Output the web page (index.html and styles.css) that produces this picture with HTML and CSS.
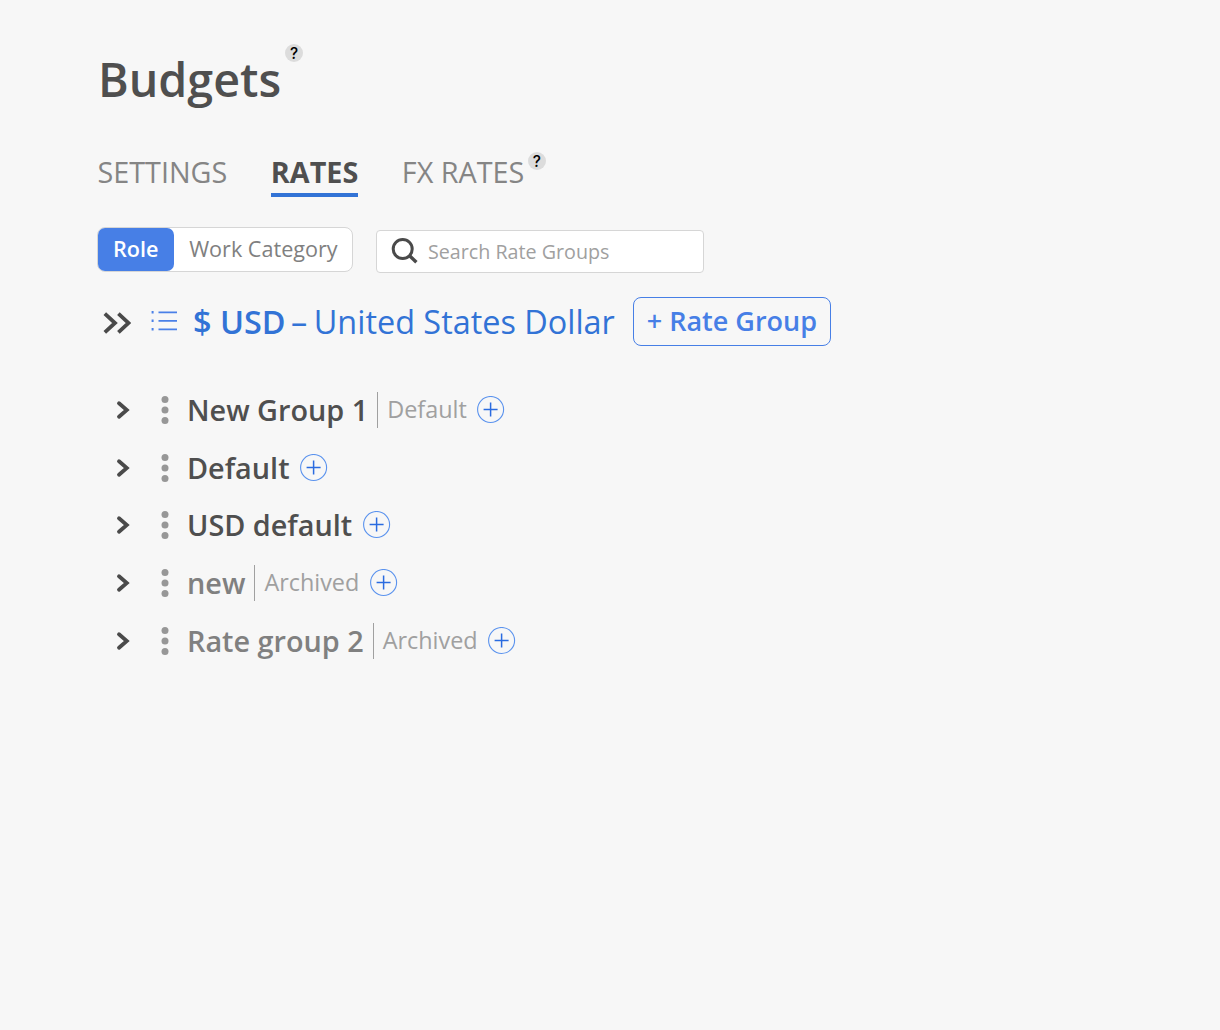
FILE: index.html
```html
<!DOCTYPE html>
<html lang="en">
<head>
<meta charset="utf-8">
<title>Budgets</title>
<link rel="stylesheet" href="styles.css">
</head>
<body>
<svg class="defs" width="0" height="0">
  <symbol id="chevron" viewBox="0 0 14 20"><path d="M3 3.2 10.8 10 3 16.8" fill="none" stroke="#4a4a4a" stroke-width="3.8" stroke-linecap="round"/></symbol>
  <symbol id="dots" viewBox="0 0 8 30"><g fill="#979797"><circle cx="4" cy="4.6" r="3.5"/><circle cx="4" cy="15" r="3.5"/><circle cx="4" cy="25.4" r="3.5"/></g></symbol>
  <symbol id="plus" viewBox="0 0 28 28"><circle cx="13.6" cy="13.5" r="13" fill="none" stroke="#5b93ee" stroke-width="1.1"/><path d="M6.6 13.5H20.6M13.6 6.5V20.5" stroke="#2a6be0" stroke-width="1.5"/></symbol>
</svg>
<main class="page">
  <header class="title">
    <h1>Budgets</h1><span class="help">?</span>
  </header>
  <nav class="tabs">
    <a class="tab">SETTINGS</a>
    <a class="tab active">RATES</a>
    <a class="tab fx">FX RATES</a><span class="help">?</span>
  </nav>
  <div class="filters">
    <div class="toggle"><span class="option selected">Role</span><span class="option">Work Category</span></div>
    <div class="search">
      <svg width="28" height="28" viewBox="0 0 28 28" fill="none" stroke="#4a4a4a"><circle cx="11.7" cy="12" r="9.5" stroke-width="3"/><path d="M18.3 18.6 25.4 25.3" stroke-width="3.4"/></svg>
      <span>Search Rate Groups</span>
    </div>
  </div>
  <section class="currency">
    <svg class="expand" width="28" height="24" viewBox="0 0 28 24" fill="none" stroke="#4a4a4a" stroke-width="3.8"><path d="M1.8 2.6 12 12 1.8 21.4M15.4 2.6 25.6 12 15.4 21.4"/></svg>
    <svg class="list" width="27" height="22" viewBox="0 0 27 22" stroke="#4a80e8" stroke-width="1.8"><path d="M7.5 2.3H26M7.5 10.8H26M7.5 19.3H26"/><path d="M.6 2.3H2.6M.6 10.8H2.6M.6 19.3H2.6" stroke-width="2.6"/></svg>
    <span class="code">$ USD</span><span class="dash">–</span><span class="name">United States Dollar</span>
    <button class="add">+ Rate Group</button>
  </section>
  <ul class="groups">
    <li><svg class="chev"><use href="#chevron"/></svg><svg class="menu"><use href="#dots"/></svg><span class="label">New Group 1</span><span class="tag">Default</span><svg class="plus"><use href="#plus"/></svg></li>
    <li><svg class="chev"><use href="#chevron"/></svg><svg class="menu"><use href="#dots"/></svg><span class="label">Default</span><svg class="plus"><use href="#plus"/></svg></li>
    <li><svg class="chev"><use href="#chevron"/></svg><svg class="menu"><use href="#dots"/></svg><span class="label">USD default</span><svg class="plus"><use href="#plus"/></svg></li>
    <li class="archived"><svg class="chev"><use href="#chevron"/></svg><svg class="menu"><use href="#dots"/></svg><span class="label">new</span><span class="tag">Archived</span><svg class="plus"><use href="#plus"/></svg></li>
    <li class="archived"><svg class="chev"><use href="#chevron"/></svg><svg class="menu"><use href="#dots"/></svg><span class="label">Rate group 2</span><span class="tag">Archived</span><svg class="plus"><use href="#plus"/></svg></li>
  </ul>
</main>
</body>
</html>
```
FILE: styles.css
```css
* { box-sizing: border-box; }
body { margin: 0; background: #f7f7f7; color: #4f4f4f; font-family: "Open Sans", sans-serif; white-space: nowrap; }
svg { display: block; flex: none; }
.defs { position: absolute; }
.page { padding: 44px 0 0 97px; }
.title { display: flex; height: 106px; }
h1 { margin: 0 0 0 1px; font-size: 46.6px; line-height: 70px; font-weight: 600; }
.help { flex: none; width: 18px; height: 18px; border-radius: 50%; background: #dcdcdc; color: #000; font: 500 15.5px/19px Inter, sans-serif; text-align: center; }
.title .help { margin-left: 4px; }
.tabs { display: flex; height: 77px; padding-left: 0.5px; }
.tab { height: 47px; margin-right: 43.6px; font-size: 28.75px; line-height: 44px; color: #858585; font-weight: 400; }
.tab.active { border-bottom: 4px solid #3273d6; color: #4f4f4f; font-weight: 700; }
.tab.fx { margin-right: 3.5px; }
.tabs .help { margin-top: 2px; }
.filters { display: flex; height: 70px; }
.toggle { display: flex; height: 45px; width: 256px; border: 1px solid #d6d6d6; border-radius: 8px; background: #fff; font-size: 21.6px; line-height: 42px; color: #808080; }
.option { padding: 0 15px; }
.option.selected { padding-right: 15.7px; border-radius: 7px; background: #477fe6; color: #fff; font-weight: 600; }
.search { display: flex; width: 328px; height: 43px; margin: 3px 0 0 23px; padding: 6px 14px; gap: 9px; border: 1px solid #d6d6d6; border-radius: 4px; background: #fff; color: #a0a0a0; font-size: 19.7px; line-height: 29px; }
.currency { display: flex; height: 84.2px; color: #3273d6; font-size: 32.4px; line-height: 49px; }
.expand { margin: 14px 0 0 6px; }
.list { margin: 13px 0 0 20px; }
.code { margin-left: 15px; font-weight: 600; }
.dash { margin: 0 6.5px 0 5.5px; }
.add { width: 198px; height: 49px; margin: 0 0 0 18px; padding: 0 0 2px; border: 1px solid #477fe6; border-radius: 8px; background: none; color: #477fe6; font: 600 27px/45px "Open Sans", sans-serif; }
.groups { margin: 0; padding: 0; list-style: none; }
.groups li { display: flex; align-items: center; height: 57.65px; }
.chev { width: 14px; height: 20px; margin-left: 19px; }
.menu { width: 8px; height: 30px; margin: 0 18px 0 31px; }
.label { font-size: 28.8px; line-height: 40px; font-weight: 600; }
.tag { height: 36px; margin-left: 9px; padding-left: 9px; border-left: 1px solid #a0a0a0; color: #a0a0a0; font-size: 23.4px; line-height: 34px; }
.plus { width: 28px; height: 28px; margin-left: 10.5px; }
.archived .label { color: #808080; }
```
